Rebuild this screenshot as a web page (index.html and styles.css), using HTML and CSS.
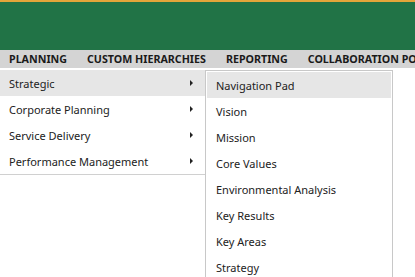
FILE: index.html
```html
<!DOCTYPE html>
<html lang="en">
<head>
    <meta charset="UTF-8">
    <meta name="viewport" content="width=device-width, initial-scale=1.0">
    <title>Planning</title>
    <link rel="stylesheet" href="styles.css">
</head>
<body>
    <div class="top-banner"></div>
    <div class="main-nav">
        <span class="nav-item">PLANNING</span>
        <span class="nav-sep"></span>
        <span class="nav-item">CUSTOM HIERARCHIES</span>
        <span class="nav-sep"></span>
        <span class="nav-item">REPORTING</span>
        <span class="nav-sep"></span>
        <span class="nav-item">COLLABORATION PORTAL</span>
    </div>
    <div class="menus">
        <ul class="menu">
            <li class="menu-item active">Strategic <span class="arrow"></span></li>
            <li class="menu-item">Corporate Planning <span class="arrow"></span></li>
            <li class="menu-item">Service Delivery <span class="arrow"></span></li>
            <li class="menu-item">Performance Management <span class="arrow"></span></li>
        </ul>
        <ul class="submenu">
            <li class="sub-item active">Navigation Pad</li>
            <li class="sub-item">Vision</li>
            <li class="sub-item">Mission</li>
            <li class="sub-item">Core Values</li>
            <li class="sub-item">Environmental Analysis</li>
            <li class="sub-item">Key Results</li>
            <li class="sub-item">Key Areas</li>
            <li class="sub-item">Strategy</li>
        </ul>
    </div>
</body>
</html>
```

FILE: styles.css
```css
body{
    margin: 0;
    font-family: "Noto Sans", "Open Sans", sans-serif;
    background-color: #fff;
    color: #222;
    overflow: hidden;
}
.top-banner{
    height: 48px;
    border-top: 2px solid #e3a53a;
    background-color: #217346;
}
.main-nav{
    height: 18px;
    background-color: #d4d4d4;
    display: flex;
    align-items: center;
    white-space: nowrap;
    overflow: hidden;
    padding-left: 9px;
}
.nav-item{
    font-size: 10.7px;
    font-weight: bold;
    color: #1a1a1a;
}
.nav-sep{
    width: 1px;
    height: 14px;
    background-color: #333;
    margin: 0 10px;
}
.menus{
    display: flex;
    align-items: flex-start;
}
.menu, .submenu{
    list-style: none;
    margin: 0;
    font-size: 11px;
}
.menu{
    width: 205px;
    padding: 2px 0 0 0;
    border-bottom: 1px solid #d0d0d0;
    box-sizing: border-box;
}
.menu-item{
    height: 26px;
    display: flex;
    align-items: center;
    justify-content: space-between;
    padding: 0 12px 0 9px;
}
.active{
    background-color: #e6e6e6;
}
.arrow{
    width: 0;
    height: 0;
    border-top: 3px solid transparent;
    border-bottom: 3px solid transparent;
    border-left: 3px solid #222;
}
.submenu{
    width: 188px;
    margin-top: 2px;
    padding: 1px;
    border: 1px solid #c8c8c8;
    border-bottom: none;
    background-color: #fff;
    box-sizing: border-box;
}
.sub-item{
    height: 26px;
    display: flex;
    align-items: center;
    padding-left: 9px;
}
```
